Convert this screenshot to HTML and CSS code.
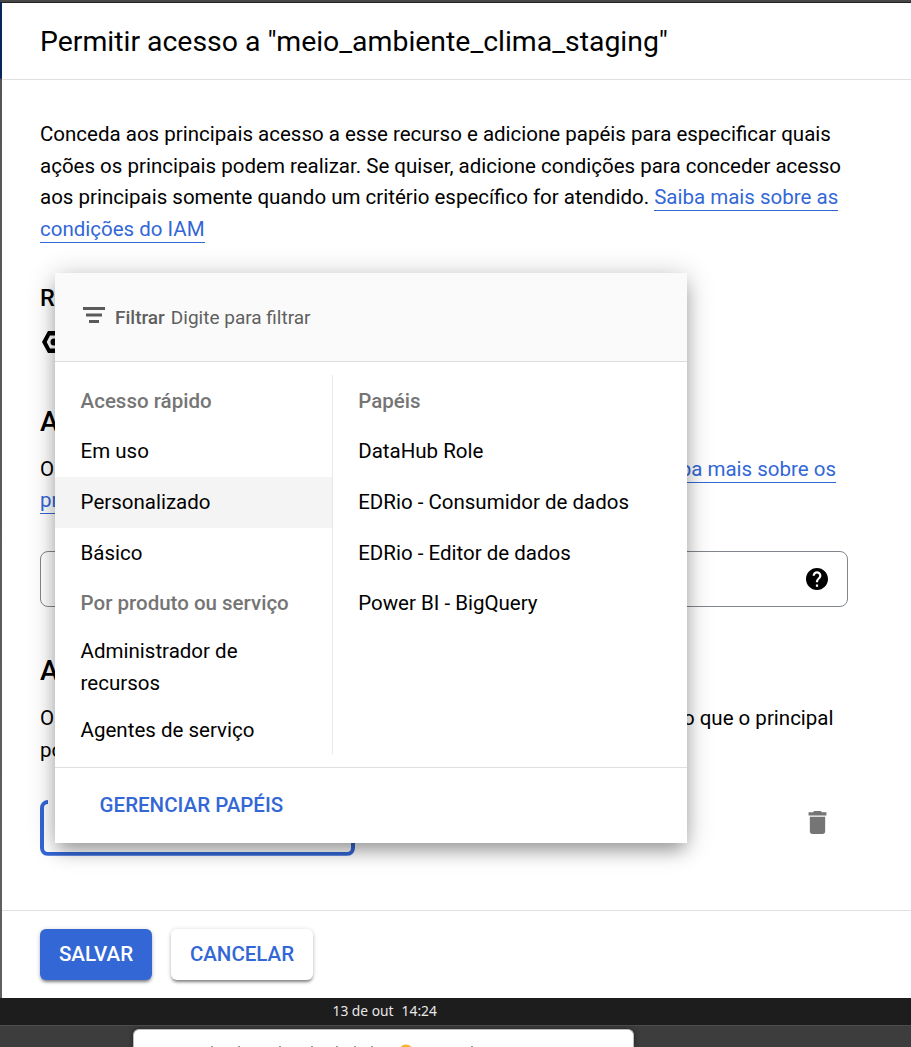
FILE: index.html
```html
<!DOCTYPE html>
<html lang="pt-BR">
<head>
<meta charset="utf-8">
<title>Permitir acesso</title>
<link rel="stylesheet" href="styles.css">
</head>
<body>
<div class="screen">
  <section class="panel">
    <header class="panel-header"><h1>Permitir acesso a "meio_ambiente_clima_staging"</h1></header>
    <main class="content">
      <p class="intro">Conceda aos principais acesso a esse recurso e adicione papéis para especificar quais<br>ações os principais podem realizar. Se quiser, adicione condições para conceder acesso<br>aos principais somente quando um critério específico for atendido. <a class="link">Saiba mais sobre as</a><br><a class="link">condições do IAM</a></p>
      <h3 class="resource-title">R</h3>
      <svg class="resource-icon" viewBox="0 0 26 24"><path fill-rule="evenodd" d="M7 1h12l6 11-6 11H7L1 12zM9 5.500 5.700 12 9 18.500h8l3.300-6.500L17 5.500z"/><circle cx="13" cy="12" r="3.500"/></svg>
      <h2 class="section-title">A</h2>
      <div class="covered principals"><span>Os</span><a class="link">Saiba mais sobre os</a></div>
      <div class="covered"><a class="link">pr</a></div>
      <div class="principal-input">
        <svg class="help" viewBox="2 2 20 20"><path d="M12 2C6.480 2 2 6.480 2 12s4.480 10 10 10 10-4.480 10-10S17.520 2 12 2zm1 17h-2v-2h2v2zm2.070-7.750-.9.920C13.450 12.900 13 13.500 13 15h-2v-.5c0-1.100.45-2.100 1.170-2.830l1.240-1.260c.37-.36.59-.86.59-1.410 0-1.100-.9-2-2-2s-2 .9-2 2H8c0-2.210 1.790-4 4-4s4 1.790 4 4c0 .88-.36 1.680-.93 2.250z"/></svg>
      </div>
      <h2 class="section-title roles-title">A</h2>
      <div class="covered roles"><span>Os</span><span>o que o principal</span></div>
      <div class="covered"><span>po</span></div>
      <div class="role-row">
        <div class="role-select"></div>
        <svg class="trash" viewBox="5 3 14 18"><path d="M6 19c0 1.100.9 2 2 2h8c1.100 0 2-.9 2-2V7.500H6V19zM19 4h-3.500l-1-1h-5l-1 1H5v2.500h14V4z"/></svg>
      </div>

      <div class="popover">
        <div class="filter">
          <svg class="filter-icon" viewBox="0 0 22 16"><path d="M0 0h22v3H0zM3 6.500h16v3H3zM6 13h10v3H6z"/></svg>
          <b>Filtrar</b><span>Digite para filtrar</span>
        </div>
        <div class="columns">
          <div class="column categories">
            <div class="item group">Acesso rápido</div>
            <div class="item">Em uso</div>
            <div class="item selected">Personalizado</div>
            <div class="item">Básico</div>
            <div class="item group">Por produto ou serviço</div>
            <div class="item double">Administrador de<br>recursos</div>
            <div class="item last">Agentes de serviço</div>
          </div>
          <div class="column role-list">
            <div class="item group">Papéis</div>
            <div class="item">DataHub Role</div>
            <div class="item">EDRio - Consumidor de dados</div>
            <div class="item">EDRio - Editor de dados</div>
            <div class="item">Power BI - BigQuery</div>
          </div>
        </div>
        <div class="manage">GERENCIAR PAPÉIS</div>
      </div>
    </main>
    <footer class="actions">
      <button class="button primary">SALVAR</button>
      <button class="button">CANCELAR</button>
    </footer>
  </section>
  <div class="system-bar"><span>13 de out</span><span>14:24</span></div>
  <div class="desktop">
    <div class="window">
      <svg class="clipped-line" viewBox="0 0 499 17">
        <path fill="#999" d="M77 16h2v1h-2zM104 16h2v1h-2zM145 16h2v1h-2zM177 16h2v1h-2zM202 16h2v1h-2zM220 16h2v1h-2zM237 16h2v1h-2zM337 16h2v1h-2z"/>
        <circle cx="272" cy="22" r="7.500" fill="#f6b62c"/>
      </svg>
    </div>
  </div>
</div>
</body>
</html>
```
FILE: styles.css
```css
* { box-sizing: border-box; }
body { margin: 0; }
h1, h2, h3, p { margin: 0; }
svg { display: block; }
.screen {
  width: 911px; height: 1047px; overflow: hidden;
  display: flex; flex-direction: column;
  font: 400 20.5px/31.67px Roboto, sans-serif; color: #000;
  background: #fff; border-top: 2px solid #474747;
}
.panel {
  height: 996px; flex-shrink: 0; display: flex; flex-direction: column;
  border-left: 2px solid; border-image: linear-gradient(#07265b 77px, #555 78px, #606060) 1;
  box-shadow: inset 0 1px #222;
}
.panel-header { height: 78px; padding: 20px 38px 0; border-bottom: 1px solid #e0e0e0; }
.panel-header h1 { font-size: 28.4px; line-height: 40px; font-weight: 400; white-space: nowrap; }
.content { position: relative; height: 830px; padding: 39px 38px 0; white-space: nowrap; }
.link { color: #3367d6; border-bottom: 1px solid #3367d6; padding-bottom: 1px; }
.resource-title { margin-top: 38px; height: 28px; font-size: 23.5px; line-height: 28px; font-weight: 500; }
.resource-icon { width: 26px; height: 24px; margin: 18px 0 0 1px; }
.section-title { margin-top: 50px; height: 36px; font-size: 28px; line-height: 36px; font-weight: 500; }
.covered { width: 796px; display: flex; justify-content: space-between; }
.covered .link { height: 29px; padding: 0; }
.covered > .link:only-child { margin-bottom: 2.67px; }
.principals { margin-top: 14px; height: 31.67px; }
.roles { width: 793.5px; margin-top: 14px; height: 31.3px; }
.principal-input {
  width: 808px; height: 56px; margin-top: 34.33px; padding: 0 19px 1px 0;
  display: flex; align-items: center; justify-content: flex-end;
  border: 1px solid #80868b; border-radius: 8px;
}
.help { width: 22px; height: 22px; }
.roles-title { margin-top: 46px; }
.role-row { width: 786.5px; margin-top: 33.4px; display: flex; justify-content: space-between; }
.role-select {
  width: 315px; height: 56px; border: 4px solid #3367d6; border-radius: 8px;
  clip-path: polygon(0 0, 8px 0, 8px 5px, 100% 5px, 100% 100%, 0 100%);
}
.trash { width: 19px; height: 23px; margin-top: 11px; fill: #757575; }
.popover {
  position: absolute; left: 53px; top: 193px; width: 632px; height: 570px;
  display: flex; flex-direction: column; background: #fff;
  box-shadow: 0 10px 16px -3px rgba(0,0,0,.28), 0 3px 26px rgba(0,0,0,.24);
}
.filter {
  height: 89px; padding: 2px 0 0 28px; display: flex; align-items: center;
  background: #fafafa; border-bottom: 1px solid #dadce0; color: #5f5f5f; font-size: 19px;
}
.filter-icon { width: 22px; height: 16px; fill: #5a5a5a; margin: -6px 10px 0 0; }
.filter b { font-weight: 500; margin-right: 6px; }
.columns { height: 405px; padding: 13px 0; display: flex; }
.column { padding-top: 1px; }
.categories { width: 278px; border-right: 1px solid #e8e8e8; }
.categories .item { padding-left: 25.6px; }
.role-list .item { padding-left: 25.2px; }
.item { height: 50.7px; display: flex; align-items: center; }
.selected { background: #f4f4f4; }
.group { color: #757575; font-weight: 500; }
.double { height: 76px; line-height: 32px; }
.last { height: 51px; align-items: flex-start; padding-top: 10px; }
.manage {
  flex: 1; display: flex; align-items: center; padding-left: 44.6px;
  border-top: 1px solid #e0e0e0; color: #3367d6; font-weight: 500;
}
.actions { flex: 1; padding: 18px 38px; display: flex; gap: 19px; border-top: 1px solid #e0e0e0; }
.button {
  width: 142px; height: 51px; padding: 0 0 1px; border: 0; border-radius: 6px;
  background: #fff; color: #3367d6; font: 500 20.5px Roboto, sans-serif;
  box-shadow: 0 3px 3px -1px rgba(0,0,0,.4), 0 1px 5px rgba(0,0,0,.2);
}
.primary { width: 112px; background: #3367d6; color: #fff; }
.system-bar {
  height: 27px; flex-shrink: 0; padding-left: 332.5px; display: flex; gap: 8px; background: #1d1d1d; color: #e8e8e8;
  font: 13.8px/26px "Noto Sans", sans-serif;
}
.desktop { height: 22px; flex-shrink: 0; padding: 3px 0 0 133px; background: #3d3d3d; border-top: 1px solid #4c4c4c; }
.window { width: 501px; height: 18px; background: #fff; border: 1px solid #bbb; border-bottom: 0; border-radius: 6px 6px 0 0; box-shadow: 0 0 5px #222; overflow: hidden; }
.clipped-line { width: 499px; height: 17px; }
```
